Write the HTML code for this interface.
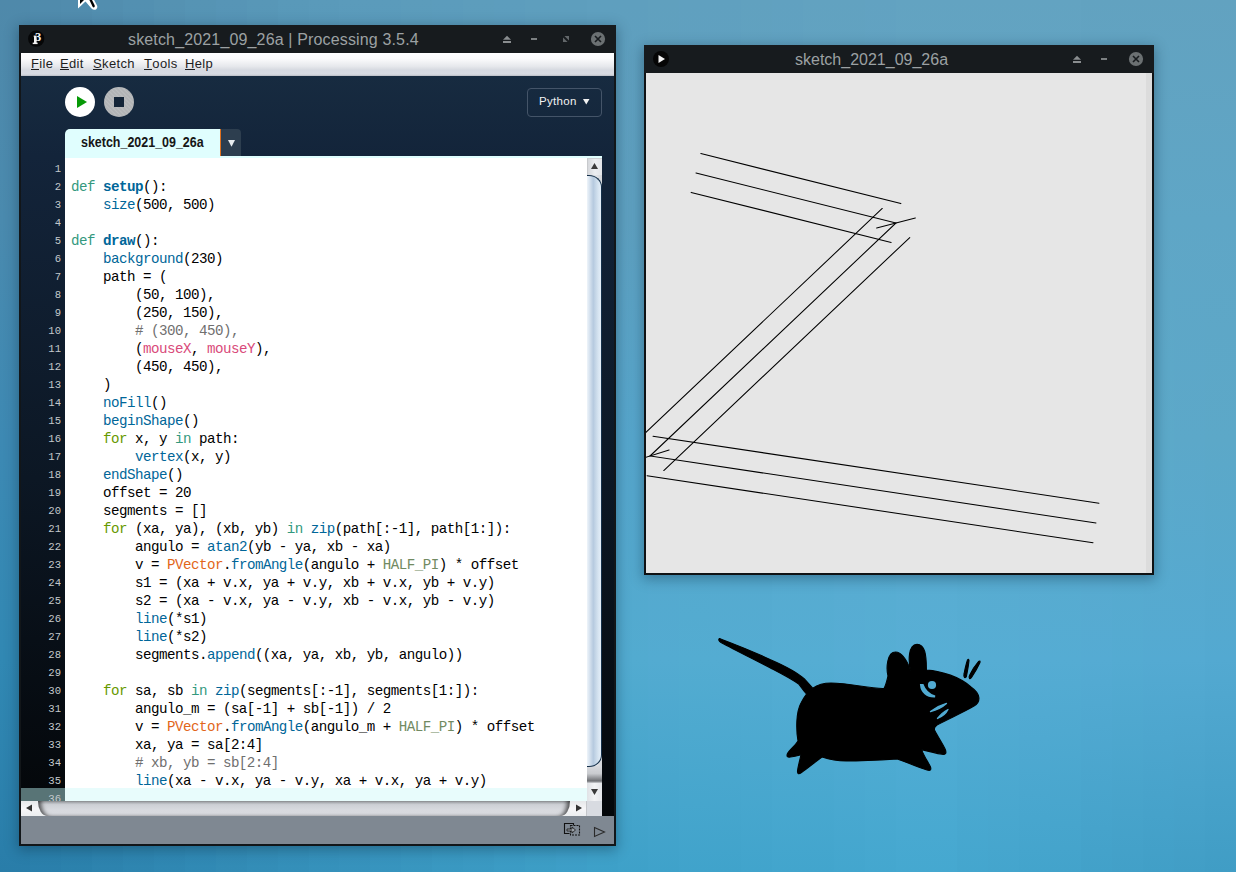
<!DOCTYPE html>
<html><head><meta charset="utf-8">
<style>
*{margin:0;padding:0;box-sizing:border-box}
html,body{width:1236px;height:872px;overflow:hidden}
body{position:relative;font-family:"Liberation Sans",sans-serif;background:#4f9cc2}
.a{position:absolute}
.bs{position:absolute;top:0;height:872px}
i{font-style:normal}
.code{position:absolute;font-family:"Liberation Mono",monospace;font-size:14.2px;letter-spacing:-0.52px;line-height:18px;white-space:pre;color:#000}
.code .t{color:#33997e}.code .g{color:#669900}.code .f{color:#006699}.code .fb{color:#006699;font-weight:bold}
.code .m{color:#d94a7a}.code .o{color:#e2661a}.code .h{color:#718a62}.code .cm{color:#6f6f6f}
.ln{position:absolute;font-family:"Liberation Mono",monospace;font-size:10.6px;line-height:18px;white-space:pre;color:#c4c9cc;text-align:right}
.menu span{position:absolute;top:56px;font-size:13px;color:#1e1e1e;letter-spacing:0.35px}
.menu u{text-decoration:none;position:relative}
.menu u:after{content:"";position:absolute;left:0;right:0;bottom:1px;height:1px;background:#1e1e1e}
</style></head><body>
<div class="bs" style="left:0px;width:32px;background:linear-gradient(#4f89aa 0px,#4a8aae 220px,#3d89b3 440px,#3188b3 660px,#297da9 872px)"></div>
<div class="bs" style="left:30px;width:32px;background:linear-gradient(#508bac 0px,#4b8baf 220px,#3e8bb4 440px,#328ab4 660px,#2a7fab 872px)"></div>
<div class="bs" style="left:61px;width:32px;background:linear-gradient(#518cad 0px,#4b8cb0 220px,#3f8db6 440px,#348bb6 660px,#2b81ac 872px)"></div>
<div class="bs" style="left:92px;width:32px;background:linear-gradient(#528eaf 0px,#4c8db1 220px,#408fb8 440px,#358db8 660px,#2d83ae 872px)"></div>
<div class="bs" style="left:123px;width:32px;background:linear-gradient(#5390b1 0px,#4c8eb2 220px,#4191b9 440px,#378fb9 660px,#2e85b0 872px)"></div>
<div class="bs" style="left:154px;width:32px;background:linear-gradient(#5592b2 0px,#4d8fb3 220px,#4292bb 440px,#3890bb 660px,#2f87b2 872px)"></div>
<div class="bs" style="left:185px;width:32px;background:linear-gradient(#5694b4 0px,#4d90b4 220px,#4394bc 440px,#3a92bc 660px,#3089b4 872px)"></div>
<div class="bs" style="left:216px;width:32px;background:linear-gradient(#5795b6 0px,#4e91b5 220px,#4496be 440px,#3b94be 660px,#328bb5 872px)"></div>
<div class="bs" style="left:247px;width:32px;background:linear-gradient(#5897b7 0px,#4e92b6 220px,#4598c0 440px,#3d95c0 660px,#338db7 872px)"></div>
<div class="bs" style="left:278px;width:32px;background:linear-gradient(#5999b9 0px,#4f93b7 220px,#469ac1 440px,#3e97c1 660px,#348fb9 872px)"></div>
<div class="bs" style="left:309px;width:32px;background:linear-gradient(#5a9aba 0px,#5094b8 220px,#489cc2 440px,#4099c3 660px,#3591bb 872px)"></div>
<div class="bs" style="left:339px;width:32px;background:linear-gradient(#5b9bbb 0px,#5195b9 220px,#499dc3 440px,#429bc4 660px,#3692bc 872px)"></div>
<div class="bs" style="left:370px;width:32px;background:linear-gradient(#5b9bbb 0px,#5396ba 220px,#4b9ec4 440px,#449dc5 660px,#3794be 872px)"></div>
<div class="bs" style="left:401px;width:32px;background:linear-gradient(#5c9cbb 0px,#5497bb 220px,#4c9fc5 440px,#469fc7 660px,#3896bf 872px)"></div>
<div class="bs" style="left:432px;width:32px;background:linear-gradient(#5c9cbc 0px,#5699bc 220px,#4ea0c6 440px,#47a0c8 660px,#3998c1 872px)"></div>
<div class="bs" style="left:463px;width:32px;background:linear-gradient(#5d9dbc 0px,#579abc 220px,#4fa1c7 440px,#49a2ca 660px,#3a99c2 872px)"></div>
<div class="bs" style="left:494px;width:32px;background:linear-gradient(#5d9dbd 0px,#599bbd 220px,#51a2c8 440px,#4ba4cb 660px,#3b9bc4 872px)"></div>
<div class="bs" style="left:525px;width:32px;background:linear-gradient(#5e9ebd 0px,#5a9dbe 220px,#52a3c9 440px,#4da6cc 660px,#3c9dc5 872px)"></div>
<div class="bs" style="left:556px;width:32px;background:linear-gradient(#5e9ebd 0px,#5c9ebf 220px,#54a4ca 440px,#4fa8ce 660px,#3d9ec7 872px)"></div>
<div class="bs" style="left:587px;width:32px;background:linear-gradient(#5f9fbe 0px,#5d9fc0 220px,#55a5cb 440px,#51aacf 660px,#3da0c8 872px)"></div>
<div class="bs" style="left:618px;width:32px;background:linear-gradient(#5f9fbe 0px,#5ea0c0 220px,#56a6cc 440px,#52abd0 660px,#3ea1c9 872px)"></div>
<div class="bs" style="left:648px;width:32px;background:linear-gradient(#60a0be 0px,#5ea1c1 220px,#57a7cc 440px,#53abd1 660px,#3fa2ca 872px)"></div>
<div class="bs" style="left:679px;width:32px;background:linear-gradient(#60a0bf 0px,#5ea1c1 220px,#57a7cc 440px,#53acd1 660px,#40a3cb 872px)"></div>
<div class="bs" style="left:710px;width:32px;background:linear-gradient(#60a0bf 0px,#5fa2c2 220px,#58a8cc 440px,#54acd2 660px,#40a3cb 872px)"></div>
<div class="bs" style="left:741px;width:32px;background:linear-gradient(#61a1bf 0px,#5fa3c3 220px,#58a8cc 440px,#54acd2 660px,#41a4cc 872px)"></div>
<div class="bs" style="left:772px;width:32px;background:linear-gradient(#61a1c0 0px,#5fa3c3 220px,#59a9cd 440px,#55add3 660px,#42a5cd 872px)"></div>
<div class="bs" style="left:803px;width:32px;background:linear-gradient(#62a2c0 0px,#5fa4c4 220px,#59a9cd 440px,#55add3 660px,#42a5cd 872px)"></div>
<div class="bs" style="left:834px;width:32px;background:linear-gradient(#62a2c0 0px,#5fa4c4 220px,#5aaacd 440px,#56add4 660px,#43a6ce 872px)"></div>
<div class="bs" style="left:865px;width:32px;background:linear-gradient(#62a2c1 0px,#60a5c5 220px,#5aaacd 440px,#56aed4 660px,#44a7cf 872px)"></div>
<div class="bs" style="left:896px;width:32px;background:linear-gradient(#63a3c1 0px,#60a6c6 220px,#5babcd 440px,#57aed5 660px,#45a8d0 872px)"></div>
<div class="bs" style="left:927px;width:32px;background:linear-gradient(#63a3c1 0px,#60a6c6 220px,#5babcd 440px,#57aed5 660px,#45a8d0 872px)"></div>
<div class="bs" style="left:957px;width:32px;background:linear-gradient(#63a3c1 0px,#60a6c6 220px,#5babcc 440px,#56add4 660px,#44a6ce 872px)"></div>
<div class="bs" style="left:988px;width:32px;background:linear-gradient(#63a3c1 0px,#60a6c6 220px,#5baacc 440px,#56add4 660px,#44a5cd 872px)"></div>
<div class="bs" style="left:1019px;width:32px;background:linear-gradient(#63a3c1 0px,#60a6c6 220px,#5baacb 440px,#56acd4 660px,#43a4cc 872px)"></div>
<div class="bs" style="left:1050px;width:32px;background:linear-gradient(#63a3c1 0px,#60a6c6 220px,#5baacb 440px,#55acd3 660px,#43a3cb 872px)"></div>
<div class="bs" style="left:1081px;width:32px;background:linear-gradient(#62a2c0 0px,#5fa6c6 220px,#5ca9ca 440px,#55abd3 660px,#42a1c9 872px)"></div>
<div class="bs" style="left:1112px;width:32px;background:linear-gradient(#62a2c0 0px,#5fa6c6 220px,#5ca9ca 440px,#54abd2 660px,#42a0c8 872px)"></div>
<div class="bs" style="left:1143px;width:32px;background:linear-gradient(#62a2c0 0px,#5fa6c6 220px,#5ca9c9 440px,#54aad2 660px,#419fc7 872px)"></div>
<div class="bs" style="left:1174px;width:32px;background:linear-gradient(#62a2c0 0px,#5fa6c6 220px,#5ca8c9 440px,#54aad2 660px,#419ec6 872px)"></div>
<div class="bs" style="left:1205px;width:32px;background:linear-gradient(#62a2c0 0px,#5fa6c6 220px,#5ca8c8 440px,#53a9d1 660px,#409dc5 872px)"></div>

<!-- ========== Processing window ========== -->
<div class="a" style="left:19px;top:25px;width:597px;height:821px;background:#121619;box-shadow:0 3px 12px 1px rgba(10,40,60,0.38)"></div>
<div class="a" style="left:19px;top:25px;width:597px;height:28px;background:#171b1e"></div>
<!-- processing icon -->
<svg class="a" style="left:26px;top:28px" width="22" height="22" viewBox="26 28 22 22">
<circle cx="36.2" cy="38.7" r="8.1" fill="#050607"/>
<rect x="34" y="35.6" width="2.6" height="7.4" fill="#f2f2f2"/>
<rect x="32.7" y="42.6" width="4.9" height="1.5" fill="#f2f2f2"/>
<path d="M33,36.3 L34,35.6 L34.6,36.6 Z" fill="#cfcfcf"/>
<text x="35" y="41" font-family="Liberation Serif" font-weight="bold" font-size="12.5" fill="#f2f2f2">3</text>
</svg>
<div class="a" style="left:128px;top:31px;font-size:16px;color:#9ca1a3;white-space:nowrap;letter-spacing:0.15px">sketch_2021_09_26a | Processing 3.5.4</div>
<!-- title buttons -->
<svg class="a" style="left:495px;top:28px" width="115" height="22" viewBox="495 28 115 22">
<path d="M503,39.8 L507,35.8 L511,39.8 Z" fill="#8a8e90"/><rect x="503" y="41" width="8" height="2" fill="#8a8e90"/>
<rect x="531" y="38" width="6" height="2" fill="#7c8082"/>
<path d="M563,36 L569,36 L569,42 L563,42 Z" fill="#62676a"/>
<path d="M562.5,35.5 L569.5,42.5" stroke="#171b1e" stroke-width="2"/>
<circle cx="598" cy="39" r="7.1" fill="#6b7072"/>
<path d="M595,36 L601,42 M601,36 L595,42" stroke="#171b1e" stroke-width="1.6"/>
</svg>
<!-- menubar -->
<div class="a" style="left:21px;top:53px;width:593px;height:23px;background:linear-gradient(#ffffff,#fbfbfc 25%,#e6e8ec 58%,#d6d9e0 74%,#d8dbe2 92%,#babdc4)"></div>
<div class="menu">
<span style="left:31px"><u>F</u>ile</span>
<span style="left:60px"><u>E</u>dit</span>
<span style="left:93px"><u>S</u>ketch</span>
<span style="left:144px"><u>T</u>ools</span>
<span style="left:185px"><u>H</u>elp</span>
</div>
<!-- main navy -->
<div class="a" style="left:21px;top:76px;width:593px;height:740px;background:linear-gradient(#172b40 0px,#13243a 80px,#132438 100%)"></div>
<!-- play / stop -->
<svg class="a" style="left:60px;top:84px" width="80" height="36" viewBox="60 84 80 36">
<defs><pattern id="hatch" width="3" height="3" patternUnits="userSpaceOnUse" patternTransform="rotate(-45)"><rect width="3" height="3" fill="#b2b4b6"/><rect width="1" height="3" fill="#bcbec0"/></pattern></defs>
<circle cx="80" cy="102" r="15" fill="#ffffff"/>
<path d="M77,96 L77,108 L87,102 Z" fill="#069906"/>
<circle cx="119" cy="102" r="15" fill="url(#hatch)"/>
<rect x="114" y="97" width="10" height="10" fill="#142538"/>
</svg>
<!-- Python mode button -->
<div class="a" style="left:527px;top:88px;width:75px;height:29px;border:1px solid #445468;border-radius:4px"></div>
<div class="a" style="left:539px;top:95px;font-size:11.5px;color:#f2f2f2;letter-spacing:0.3px">Python</div>
<svg class="a" style="left:582px;top:98px" width="9" height="8" viewBox="0 0 9 8"><path d="M1,1 L7.5,1 L4.25,6.5 Z" fill="#f2f2f2"/></svg>
<!-- tab -->
<div class="a" style="left:65px;top:129px;width:156px;height:27px;background:#e0fefe;border-radius:5px 0 0 0"></div>
<div class="a" style="left:219.5px;top:129px;width:1.5px;height:27px;background:#e0701e"></div>
<div class="a" style="left:221px;top:129px;width:20px;height:27px;background:#2d3e4f;border-radius:0 4px 0 0"></div>
<svg class="a" style="left:226px;top:138px" width="10" height="10" viewBox="0 0 10 10"><path d="M2,2 L9,2 L5.5,8.7 Z" fill="#e8ecef"/></svg>
<div class="a" style="left:81px;top:134px;font-size:14px;font-weight:bold;color:#161616;white-space:nowrap;transform:scaleX(0.89);transform-origin:0 0">sketch_2021_09_26a</div>
<!-- gutter -->
<div class="a" style="left:21px;top:156px;width:44px;height:645px;background:linear-gradient(#13243a,#0c1724 50%,#04070a)"></div>
<div class="a" style="left:21px;top:788px;width:44px;height:13px;background:#587476"></div>
<div class="ln" style="left:21px;top:160px;width:40px;height:643px;overflow:hidden">1
2
3
4
5
6
7
8
9
10
11
12
13
14
15
16
17
18
19
20
21
22
23
24
25
26
27
28
29
30
31
32
33
34
35
36</div>
<!-- right dark strip -->
<div class="a" style="left:602px;top:156px;width:12px;height:660px;background:linear-gradient(#13243a,#0c1724 50%,#04070a)"></div>
<!-- editor -->
<div class="a" style="left:65px;top:156px;width:537px;height:645px;background:#ffffff;border-top:2px solid #e0fefe;overflow:hidden">
  <div class="a" style="left:0;top:630px;width:537px;height:18px;background:#e8fcfc"></div>
  <div class="code" style="left:6px;top:2px">
<i class="t">def</i> <i class="fb">setup</i>():
    <i class="f">size</i>(500, 500)

<i class="t">def</i> <i class="fb">draw</i>():
    <i class="f">background</i>(230)
    path = (
        (50, 100),
        (250, 150),
        <i class="cm"># (300, 450),</i>
        (<i class="m">mouseX</i>, <i class="m">mouseY</i>),
        (450, 450),
    )
    <i class="f">noFill</i>()
    <i class="f">beginShape</i>()
    <i class="g">for</i> x, y <i class="t">in</i> path:
        <i class="f">vertex</i>(x, y)
    <i class="f">endShape</i>()
    offset = 20
    segments = []
    <i class="g">for</i> (xa, ya), (xb, yb) <i class="t">in</i> <i class="f">zip</i>(path[:-1], path[1:]):
        angulo = <i class="f">atan2</i>(yb - ya, xb - xa)
        v = <i class="o">PVector</i>.<i class="f">fromAngle</i>(angulo + <i class="h">HALF_PI</i>) * offset
        s1 = (xa + v.x, ya + v.y, xb + v.x, yb + v.y)
        s2 = (xa - v.x, ya - v.y, xb - v.x, yb - v.y)
        <i class="f">line</i>(*s1)
        <i class="f">line</i>(*s2)
        segments.<i class="f">append</i>((xa, ya, xb, yb, angulo))

    <i class="g">for</i> sa, sb <i class="t">in</i> <i class="f">zip</i>(segments[:-1], segments[1:]):
        angulo_m = (sa[-1] + sb[-1]) / 2
        v = <i class="o">PVector</i>.<i class="f">fromAngle</i>(angulo_m + <i class="h">HALF_PI</i>) * offset
        xa, ya = sa[2:4]
        <i class="cm"># xb, yb = sb[2:4]</i>
        <i class="f">line</i>(xa - v.x, ya - v.y, xa + v.x, ya + v.y)
</div>
</div>
<!-- vertical scrollbar -->
<div class="a" style="left:587px;top:158px;width:15px;height:643px;background:linear-gradient(90deg,#c9ccd2,#e6e8ec 50%,#d8dbe0)"></div>
<div class="a" style="left:587px;top:158px;width:15px;height:17px;background:linear-gradient(90deg,#d6d8dc,#eceef1 50%,#e2e4e8);border-left:1px solid #c8cacd;border-top:1px solid #cfd1d4"></div>
<svg class="a" style="left:587px;top:158px" width="15" height="17" viewBox="0 0 15 17"><path d="M4,11 L11,11 L7.5,5 Z" fill="#3a3a3a"/></svg>
<div class="a" style="left:587px;top:175px;width:15px;height:608px;background:linear-gradient(90deg,#c8cace,#e2e4e8 60%,#d4d6da)"></div>
<div class="a" style="left:587px;top:766px;width:15px;height:17px;background:linear-gradient(#d8dade,#c9cbcf 45%,#6e7074 88%,#d0d2d6)"></div>
<div class="a" style="left:587px;top:175px;width:15px;height:592px;border-radius:0 13px 13px 0/0 12px 12px 0;background:linear-gradient(90deg,#eef4fa,#b6cadf 45%,#d6e4f1 80%,#e4eef8);border:1.3px solid #15304a;border-left:none"></div>
<div class="a" style="left:587px;top:783px;width:15px;height:18px;background:linear-gradient(90deg,#e0e2e6,#f2f3f5 50%,#e4e6ea)"></div>
<svg class="a" style="left:587px;top:783px" width="15" height="18" viewBox="0 0 15 18"><path d="M4,6 L11,6 L7.5,12 Z" fill="#3a3a3a"/></svg>
<!-- horizontal scrollbar -->
<div class="a" style="left:21px;top:801px;width:566px;height:15px;background:linear-gradient(#e6e8ea,#f6f6f8 50%,#eceef0)"></div>
<svg class="a" style="left:21px;top:801px" width="17" height="15" viewBox="0 0 17 15"><path d="M5,7 L11,3.5 L11,10.5 Z" fill="#333"/></svg>
<div class="a" style="left:38px;top:801px;width:532px;height:15px;border-radius:0 0 9px 9px/0 0 15px 15px;background:linear-gradient(#a4a7ac,#cdd0d5 25%,#d8dadf 60%,#d6d8dd);box-shadow:inset 5px 0 4px -2px rgba(0,0,0,0.6),inset -5px 0 4px -2px rgba(0,0,0,0.6)"></div>
<svg class="a" style="left:570px;top:801px" width="17" height="15" viewBox="0 0 17 15"><path d="M12,7 L6,3.5 L6,10.5 Z" fill="#333"/></svg>
<div class="a" style="left:586px;top:801px;width:1px;height:15px;background:#c4c6ca"></div>
<div class="a" style="left:587px;top:801px;width:15px;height:15px;background:#d8dbe1"></div>
<!-- status bar -->
<div class="a" style="left:21px;top:816px;width:593px;height:28px;background:#7f8892"></div>
<svg class="a" style="left:560px;top:818px" width="54" height="24" viewBox="560 818 54 24">
<path d="M569.5,833.5 L564.5,833.5 L564.5,823.5 L573.5,823.5 L573.5,825" fill="none" stroke="#111" stroke-width="1.1"/>
<rect x="570.5" y="825.5" width="9" height="9.5" fill="none" stroke="#111" stroke-width="1.1" stroke-dasharray="2,1"/>
<path d="M567,829 L572,829 L572,827 L575.5,830 L572,833 L572,831 L567,831 Z" fill="#9aa0a6" stroke="#222" stroke-width="0.9"/>
<path d="M594.5,827.5 L604.5,832 L594.5,836.5 Z" fill="none" stroke="#2a2a2a" stroke-width="1.1"/>
</svg>

<!-- ========== Sketch window ========== -->
<div class="a" style="left:644px;top:45px;width:510px;height:530px;background:#0f1214;box-shadow:0 3px 12px 1px rgba(10,40,60,0.38)"></div>
<div class="a" style="left:644px;top:45px;width:510px;height:28px;background:#171b1e"></div>
<svg class="a" style="left:651px;top:49px" width="20" height="20" viewBox="0 0 20 20">
<circle cx="10" cy="10" r="8" fill="#060606"/>
<path d="M7.5,6 L7.5,14 L14,10 Z" fill="#f4f4f4"/>
</svg>
<div class="a" style="left:795px;top:51px;font-size:16px;color:#9ca1a3;white-space:nowrap">sketch_2021_09_26a</div>
<svg class="a" style="left:1065px;top:48px" width="85" height="22" viewBox="1065 48 85 22">
<path d="M1073,59.8 L1077,55.8 L1081,59.8 Z" fill="#8a8e90"/><rect x="1073" y="61" width="8" height="2" fill="#8a8e90"/>
<rect x="1101" y="58" width="6" height="2" fill="#7c8082"/>
<circle cx="1136" cy="59" r="7.1" fill="#6b7072"/>
<path d="M1133,56 L1139,62 M1139,56 L1133,62" stroke="#171b1e" stroke-width="1.6"/>
</svg>
<div class="a" style="left:646px;top:73px;width:506px;height:500px;background:#dcdcdc"></div>
<svg class="a" style="left:646px;top:73px" width="500" height="500" viewBox="0 0 500 500">
<rect width="500" height="500" fill="#e6e6e6"/>
<g stroke="#000" stroke-width="1.05" fill="none" stroke-linecap="round">
<polyline points="50,100 250,150 4,383 450,450"/>
<line x1="45.15" y1="119.40" x2="245.15" y2="169.40"/>
<line x1="54.85" y1="80.60" x2="254.85" y2="130.60"/>
<line x1="236.25" y1="135.48" x2="-9.75" y2="368.48"/>
<line x1="263.75" y1="164.52" x2="17.75" y2="397.52"/>
<line x1="1.03" y1="402.78" x2="447.03" y2="469.78"/>
<line x1="6.97" y1="363.22" x2="452.97" y2="430.22"/>
<line x1="269.34" y1="144.92" x2="230.66" y2="155.08"/>
<line x1="23.08" y1="377.00" x2="-15.08" y2="389.00"/>
</g>
</svg>

<!-- ========== cursor ========== -->
<svg class="a" style="left:70px;top:0px" width="32" height="14" viewBox="70 0 32 14">
<path d="M78,-4 L78,8.5 L85.5,1.5 L91.5,8.5 Q93.5,10.5 96,9.5 Q98,8 97,5.5 L92,-4 Z" fill="#fff"/>
<path d="M80,-4 L80,4 L84.5,-0.5 Z" fill="#000"/>
<path d="M87.5,-4 L92.5,6.5 Q93.5,8 94.5,7 Q95,6 94.5,5 L90,-4 Z" fill="#000"/>
</svg>
<!-- xfce mouse -->
<svg class="a" style="left:700px;top:620px" width="300" height="170" viewBox="700 620 300 170">
<g fill="#000" stroke="#000" stroke-width="1.1" stroke-linejoin="round">
<path d="M719.5,638.5 C730,642.5 750,650 770,659.5 C785,666 797,672 805,679.5 C808,683 811,686 812.7,688.2
C818,684.5 824,683 831,683 C850,683 870,689 884,688.5
C886,685 887,680 888,676
C886,668 887,652 895.5,652 C903,652 908,663 911,671
C908,662 908,644.5 917,644.3 C925,644.3 926.5,655 926.4,670
C942,671 960,677 971,687 C981,694 981,702 974,706 C964,712 948,719 937,725 Q933,728 935,731
C938,737 943,744 945.3,749.5 Q947.5,755 942,754.3 C935,753 927,751 921.5,749.6
C924,756 928,762 930.3,766.5 Q932.3,771.5 927,770 C917,767 906,762 897.5,758.9
C880,760 862,761 846,761 C836,761 828,759 822,757
C815,762 808,768 801.5,772.5 Q797.3,775.5 797.5,771 C798,766 800,760 801,754.7
C798,755.5 794,756.5 790.5,757 Q786,757.8 787.3,754 C789,750 795,746 798,741
C796,730 796,712 801,703 C803,699 805,696 806.5,694
C803,690 801,687 799,684.3 C790,678 780,673 770,667.8 C755,660 735,650 721,642.5 Q717.5,640 719.5,638.5 Z"/>
<path d="M964.5,677.5 Q963.5,676 964,674 C965,669 966,664 967.5,660 Q968.5,658.5 969,660.5 C968.5,666 967.5,671 966.5,676 Q966,678 964.5,677.5 Z"/>
<path d="M969.5,678.5 Q968.5,677.5 969.5,675.5 C972,670 975,665.5 978.5,661.5 Q980.5,660 980,662.5 C977.5,668 974.5,673 971.5,677.5 Q970.5,679 969.5,678.5 Z"/>
</g>
<g fill="#52abd2">
<circle cx="932" cy="685" r="4.1"/>
<path d="M921,685 C921.5,692 927,697 935,696.5 C929,694.5 925,691 922.8,685 Z" stroke="#52abd2" stroke-width="2"/>
<path d="M930.5,711.5 C936,707.5 941,705 946.5,703.5 C942,707.5 937,710 930.5,711.5 Z" stroke="#52abd2" stroke-width="1.3" stroke-linejoin="round"/>
<path d="M937.5,718.5 C940.5,714.5 944,711.5 948,709.5 C946,713.5 942.5,716.5 937.5,718.5 Z" stroke="#52abd2" stroke-width="1.3" stroke-linejoin="round"/>
</g>
</svg>

</body></html>
